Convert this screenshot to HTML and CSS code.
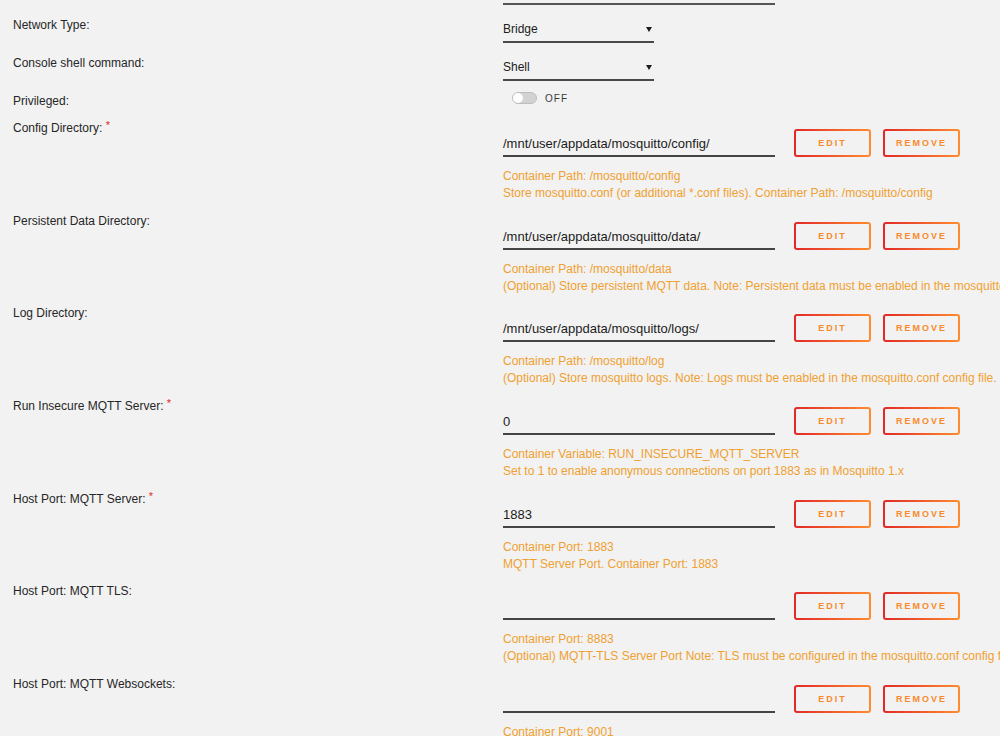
FILE: index.html
```html
<!DOCTYPE html>
<html lang="en">
<head>
    <meta charset="UTF-8">
    <meta name="viewport" content="width=device-width, initial-scale=1.0">
    <title>Update Container</title>
    <link rel="stylesheet" href="styles.css">
</head>
<body>
    <div class="form">
        <div class="row row-top">
            <div class="label"></div>
            <div class="field"><div class="line-stub"></div></div>
        </div>

        <div class="row row-select">
            <div class="label">Network Type:</div>
            <div class="field"><div class="select">Bridge</div></div>
        </div>

        <div class="row row-select">
            <div class="label">Console shell command:</div>
            <div class="field"><div class="select">Shell</div></div>
        </div>

        <div class="row row-switch">
            <div class="label">Privileged:</div>
            <div class="field">
                <div class="switch">
                    <span class="track"><span class="knob"></span></span>
                    <span class="switch-text">OFF</span>
                </div>
            </div>
        </div>

        <div class="row row-path">
            <div class="label">Config Directory: <span class="req">*</span></div>
            <div class="field">
                <div class="controls">
                    <div class="input">/mnt/user/appdata/mosquitto/config/</div>
                    <button class="btn">Edit</button>
                    <button class="btn">Remove</button>
                </div>
                <div class="help">
                    Container Path: /mosquitto/config<br>
                    Store mosquitto.conf (or additional *.conf files). Container Path: /mosquitto/config
                </div>
            </div>
        </div>

        <div class="row row-path">
            <div class="label">Persistent Data Directory:</div>
            <div class="field">
                <div class="controls">
                    <div class="input">/mnt/user/appdata/mosquitto/data/</div>
                    <button class="btn">Edit</button>
                    <button class="btn">Remove</button>
                </div>
                <div class="help">
                    Container Path: /mosquitto/data<br>
                    (Optional) Store persistent MQTT data. Note: Persistent data must be enabled in the mosquitto.conf config file.
                </div>
            </div>
        </div>

        <div class="row row-path">
            <div class="label">Log Directory:</div>
            <div class="field">
                <div class="controls">
                    <div class="input">/mnt/user/appdata/mosquitto/logs/</div>
                    <button class="btn">Edit</button>
                    <button class="btn">Remove</button>
                </div>
                <div class="help">
                    Container Path: /mosquitto/log<br>
                    (Optional) Store mosquitto logs. Note: Logs must be enabled in the mosquitto.conf config file.
                </div>
            </div>
        </div>

        <div class="row row-path">
            <div class="label">Run Insecure MQTT Server: <span class="req">*</span></div>
            <div class="field">
                <div class="controls">
                    <div class="input">0</div>
                    <button class="btn">Edit</button>
                    <button class="btn">Remove</button>
                </div>
                <div class="help">
                    Container Variable: RUN_INSECURE_MQTT_SERVER<br>
                    Set to 1 to enable anonymous connections on port 1883 as in Mosquitto 1.x
                </div>
            </div>
        </div>

        <div class="row row-path">
            <div class="label">Host Port: MQTT Server: <span class="req">*</span></div>
            <div class="field">
                <div class="controls">
                    <div class="input">1883</div>
                    <button class="btn">Edit</button>
                    <button class="btn">Remove</button>
                </div>
                <div class="help">
                    Container Port: 1883<br>
                    MQTT Server Port. Container Port: 1883
                </div>
            </div>
        </div>

        <div class="row row-path">
            <div class="label">Host Port: MQTT TLS:</div>
            <div class="field">
                <div class="controls">
                    <div class="input"></div>
                    <button class="btn">Edit</button>
                    <button class="btn">Remove</button>
                </div>
                <div class="help">
                    Container Port: 8883<br>
                    (Optional) MQTT-TLS Server Port Note: TLS must be configured in the mosquitto.conf config file.
                </div>
            </div>
        </div>

        <div class="row row-path">
            <div class="label">Host Port: MQTT Websockets:</div>
            <div class="field">
                <div class="controls">
                    <div class="input"></div>
                    <button class="btn">Edit</button>
                    <button class="btn">Remove</button>
                </div>
                <div class="help">
                    Container Port: 9001<br>
                    (Optional) MQTT Websockets Server Port. Container Port: 9001
                </div>
            </div>
        </div>
    </div>
</body>
</html>
```

FILE: styles.css
```css
html,
body {
    margin: 0;
    height: 100%;
    overflow: hidden;
}

body {
    background-color: #f2f2f2;
    font-family: 'Liberation Sans', 'Arial', sans-serif;
    font-size: 12px;
    color: #262626;
}

.form {
    padding-left: 13px;
}

.row {
    display: flex;
}

.label {
    width: 490px;
    flex: none;
    line-height: 16px;
}

.field {
    flex: 1;
    min-width: 0;
}

.req {
    color: #e22828;
    font-size: 11px;
    line-height: 0;
    vertical-align: 3px;
}

/* scrolled-off field above */
.row-top {
    height: 5px;
}

.line-stub {
    width: 272px;
    margin-top: 3px;
    border-bottom: 2px solid #555;
}

/* selects */
.row-select {
    height: 38px;
}

.row-select .label {
    padding-top: 12px;
}

.select {
    position: relative;
    width: 151px;
    height: 26px;
    line-height: 28px;
    margin-top: 10px;
    font-size: 12px;
    color: #1c1c1c;
    border-bottom: 2px solid #4a4a4a;
}

.select:after {
    content: "";
    position: absolute;
    right: 2px;
    top: 12px;
    border-left: 3px solid transparent;
    border-right: 3px solid transparent;
    border-top: 5px solid #1c1c1c;
}

/* switch */
.row-switch {
    height: 36px;
}

.row-switch .label {
    padding-top: 12px;
}

.switch {
    display: flex;
    align-items: center;
    gap: 8px;
    margin-top: 11px;
    margin-left: 9px;
}

.track {
    display: block;
    width: 23px;
    height: 10px;
    border: 1px solid #bdbdbd;
    border-radius: 6px;
    background-color: #d2d2d2;
    position: relative;
}

.knob {
    position: absolute;
    left: 0;
    top: 0;
    width: 10px;
    height: 10px;
    border-radius: 50%;
    background-color: #fff;
}

.switch-text {
    font-size: 10px;
    letter-spacing: 1px;
    color: #3a3a3a;
}

/* path / port / variable rows */
.row-path {
    padding-bottom: 7.67px;
}

.row-path .label {
    padding-top: 3px;
}

.controls {
    display: flex;
    align-items: flex-start;
    margin-top: 12px;
}

.input {
    width: 272px;
    height: 26px;
    line-height: 29px;
    font-size: 13px;
    color: #1c1c1c;
    border-bottom: 2px solid #444;
    white-space: nowrap;
}

.btn {
    box-sizing: border-box;
    width: 77px;
    height: 28px;
    margin-left: 19px;
    padding: 0;
    border: 2px solid transparent;
    border-radius: 3px;
    background: linear-gradient(#f2f2f2, #f2f2f2) padding-box,
                linear-gradient(90deg, #e22828, #ff8c2f) border-box;
    font-family: 'Liberation Sans', 'Arial', sans-serif;
    font-size: 9px;
    font-weight: bold;
    letter-spacing: 2px;
    text-transform: uppercase;
    color: #f98a2c;
    cursor: pointer;
}

.btn + .btn {
    margin-left: 12px;
}

.help {
    margin-top: 11px;
    line-height: 17px;
    color: #f0a030;
    white-space: nowrap;
}
```
